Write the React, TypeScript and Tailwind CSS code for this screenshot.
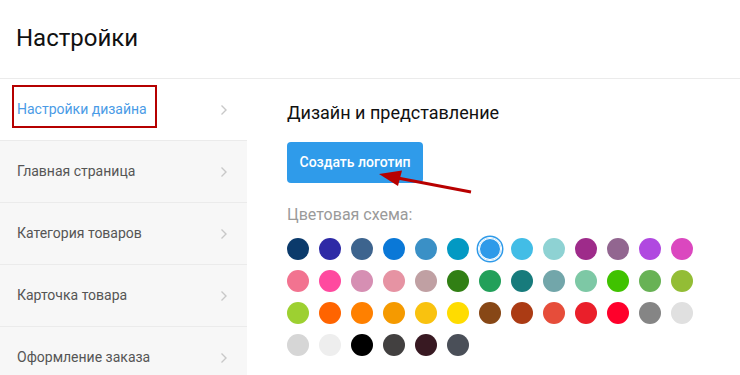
import React from 'react';

const menu = ['Главная страница', 'Категория товаров', 'Карточка товара', 'Оформление заказа'];

const colors = [
  '#0b3a6b', '#2e2aa6', '#3d648e', '#0a78d7', '#3a90c6', '#0399c3', '#2e9ae9', '#42bde6', '#8ed2d3', '#9e2b8a', '#926690', '#b049e0', '#db47bf',
  '#f27390', '#ff4a9f', '#d68fb3', '#e693a3', '#c0a0a3', '#317f14', '#22a05a', '#177b7c', '#72a6aa', '#7dc8a5', '#40c200', '#68b255', '#93bd35',
  '#9dd031', '#ff6400', '#ff8000', '#f59a00', '#f9c20f', '#ffdc00', '#874716', '#ab3b14', '#e64d3a', '#ea1f2a', '#ff002b', '#858585', '#e0e0e0',
  '#d6d6d6', '#eeeeee', '#000000', '#424040', '#381922', '#4a4f58',
];

function Chevron() {
  return (
    <svg width="8" height="12" viewBox="0 0 8 12" fill="none">
      <path d="M1.5 1.5 L6 6 L1.5 10.5" stroke="#c8c8c8" strokeWidth="1.4" />
    </svg>
  );
}

export default function App() {
  return (
    <div className="relative w-[740px] h-[375px] overflow-hidden bg-white font-['Roboto',sans-serif]">
      {/* Header */}
      <div className="h-[79px] border-b border-[#ebebeb] flex items-center px-4">
        <h1 className="text-[24px] text-[#111] pb-[2px]">Настройки</h1>
      </div>

      <div className="flex">
        {/* Sidebar */}
        <div className="w-[247px] bg-[#f7f7f7] shrink-0">
          <div className="relative h-[62px] bg-white border-b border-[#ebebeb] flex items-center justify-between pl-[17px] pr-[19px]">
            <span className="text-[14px] text-[#4a9be6]">Настройки дизайна</span>
            <Chevron />
            <div className="absolute left-[12px] top-[6px] w-[145px] h-[43px] border-2 border-[#b50000]" />
          </div>
          {menu.map((m) => (
            <div key={m} className="h-[62px] border-b border-[#ebebeb] flex items-center justify-between pl-[17px] pr-[19px]">
              <span className="text-[14px] text-[#555]">{m}</span>
              <Chevron />
            </div>
          ))}
        </div>

        {/* Content */}
        <div className="pl-[40px] pt-[22px]">
          <h2 className="text-[18px] leading-[24px] text-[#111]">Дизайн и представление</h2>
          <button className="mt-[17px] w-[136px] h-[41px] rounded-[4px] bg-[#2f9bea] text-white text-[14px] font-medium">
            Создать логотип
          </button>
          <div className="mt-[22px] text-[16px] leading-[20px] text-[#9a9a9a]">Цветовая схема:</div>
          <div className="mt-[13px] grid grid-cols-[repeat(13,22px)] gap-[10px]">
            {colors.map((c, i) => (
              <div
                key={i}
                className={
                  i === 6
                    ? 'w-[22px] h-[22px] rounded-full shadow-[inset_0_0_0_1px_#fff,0_0_0_1px_#fff,0_0_0_2.5px_#2e9ae9]'
                    : 'w-[22px] h-[22px] rounded-full'
                }
                style={{ backgroundColor: c }}
              />
            ))}
          </div>
        </div>
      </div>

      {/* Annotation arrow */}
      <svg className="absolute left-[375px] top-[165px]" width="100" height="32" viewBox="0 0 100 32">
        <line x1="20" y1="12.5" x2="96" y2="27" stroke="#b80000" strokeWidth="3" />
        <polygon points="4,9 27,5.5 23,21" fill="#b80000" />
      </svg>
    </div>
  );
}
